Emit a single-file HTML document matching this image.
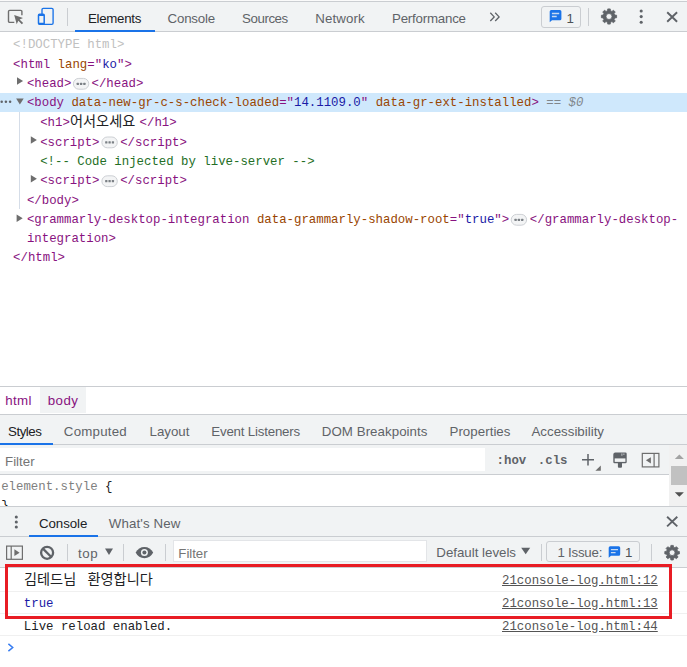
<!DOCTYPE html>
<html lang="en"><head><meta charset="utf-8"><title>DevTools</title><style>
html,body{margin:0;padding:0;}
body{width:687px;height:667px;overflow:hidden;background:#fff;position:relative;}
#r{position:absolute;left:0;top:0;width:687px;height:667px;overflow:hidden;}
#r>div,#r>span,#r>svg{position:absolute;}
#r>svg{overflow:visible;}
.s{font-family:"Liberation Sans",sans-serif;font-size:13.3px;line-height:20px;white-space:pre;}
.m{font-family:"Liberation Mono",monospace;font-size:12.37px;line-height:19px;white-space:pre;}
#clip{position:absolute;left:0;top:475px;width:669.5px;height:30.6px;overflow:hidden;}
</style></head><body><div id="r">
<div style="left:0px;top:0px;width:687px;height:1px;background:#fafafa;"></div>
<div style="left:0px;top:1px;width:687px;height:1px;background:#cacdd1;"></div>
<div style="left:0px;top:2px;width:687px;height:29px;background:#f1f3f4;"></div>
<div style="left:0px;top:31px;width:687px;height:1px;background:#cacdd1;"></div>
<div style="left:75px;top:29.6px;width:79.6px;height:2.1px;background:#1a73e8;"></div>
<div style="left:67px;top:8px;width:1px;height:17.8px;background:#cacdd1;"></div>
<div style="left:588px;top:8px;width:1px;height:17.8px;background:#cacdd1;"></div>
<div style="left:541.2px;top:6.2px;width:39.8px;height:21.5px;background:transparent;border:1px solid #cacdd1;border-radius:3px;box-sizing:border-box;"></div>
<div style="left:0px;top:93px;width:687px;height:19.2px;background:#cfe8fc;"></div>
<div style="left:18.5px;top:112.2px;width:1px;height:96.5px;background:#d5dde8;"></div>
<div style="left:0px;top:386px;width:687px;height:1px;background:#cacdd1;"></div>
<div style="left:40px;top:387px;width:45.8px;height:26px;background:#f1f3f4;"></div>
<div style="left:0px;top:414px;width:687px;height:1px;background:#cacdd1;"></div>
<div style="left:0px;top:415px;width:687px;height:29px;background:#f1f3f4;"></div>
<div style="left:0px;top:444px;width:687px;height:1px;background:#cacdd1;"></div>
<div style="left:0px;top:442.6px;width:52.8px;height:2.3px;background:#1a73e8;"></div>
<div style="left:0px;top:445px;width:687px;height:29px;background:#f1f3f4;"></div>
<div style="left:0px;top:447.5px;width:484.8px;height:23.7px;background:#fff;"></div>
<div style="left:0px;top:474px;width:669px;height:1px;background:#cacdd1;"></div>
<div style="left:669px;top:445px;width:18px;height:60.6px;background:#f1f1f1;"></div>
<div style="left:671px;top:466.3px;width:16px;height:18.4px;background:#c1c1c1;"></div>
<div style="left:0px;top:505.6px;width:687px;height:1.2px;background:#cacdd1;"></div>
<div style="left:0px;top:507px;width:687px;height:29px;background:#f1f3f4;"></div>
<div style="left:0px;top:536px;width:687px;height:1px;background:#cacdd1;"></div>
<div style="left:28.8px;top:534.6px;width:69.2px;height:2.3px;background:#1a73e8;"></div>
<div style="left:0px;top:537px;width:687px;height:30px;background:#f1f3f4;"></div>
<div style="left:0px;top:567px;width:687px;height:1px;background:#cacdd1;"></div>
<div style="left:173.1px;top:540.1px;width:254.1px;height:22.2px;background:#fff;border:1px solid #e3e5e8;box-sizing:border-box;"></div>
<div style="left:67.2px;top:543.5px;width:1px;height:17px;background:#cacdd1;"></div>
<div style="left:123px;top:543.5px;width:1px;height:17px;background:#cacdd1;"></div>
<div style="left:165.3px;top:543.5px;width:1px;height:17px;background:#cacdd1;"></div>
<div style="left:540.8px;top:543.5px;width:1px;height:17px;background:#cacdd1;"></div>
<div style="left:651.3px;top:543.5px;width:1px;height:17px;background:#cacdd1;"></div>
<div style="left:546.2px;top:541.3px;width:93.9px;height:20.9px;background:transparent;border:1px solid #cacdd1;border-radius:3px;box-sizing:border-box;"></div>
<div style="left:0px;top:591px;width:687px;height:1px;background:#f0f0f0;"></div>
<div style="left:0px;top:613.2px;width:687px;height:1px;background:#f0f0f0;"></div>
<div style="left:0px;top:634.8px;width:687px;height:1px;background:#f0f0f0;"></div>
<div style="left:5.1px;top:564.1px;width:666.7px;height:54.5px;background:transparent;border:3px solid #e81c24;box-sizing:border-box;"></div>
<span class="s" style="left:88.00px;top:8.50px;color:#202124;letter-spacing:-0.305px;">Elements</span>
<span class="s" style="left:167.50px;top:8.50px;color:#5f6368;letter-spacing:-0.185px;">Console</span>
<span class="s" style="left:242.00px;top:8.50px;color:#5f6368;letter-spacing:-0.426px;">Sources</span>
<span class="s" style="left:315.20px;top:8.50px;color:#5f6368;letter-spacing:0.117px;">Network</span>
<span class="s" style="left:392.00px;top:8.50px;color:#5f6368;letter-spacing:-0.211px;">Performance</span>
<span class="s" style="left:566.60px;top:8.50px;color:#4d5156;">1</span>
<span class="m" style="left:13.10px;top:35.50px;color:#c0c0c0;">&lt;!DOCTYPE html&gt;</span>
<span class="m" style="left:13.10px;top:55.50px;color:#881280;">&lt;html</span>
<span class="m" style="left:50.20px;top:55.50px;color:#881280;"> </span>
<span class="m" style="left:57.62px;top:55.50px;color:#994500;">lang</span>
<span class="m" style="left:87.30px;top:55.50px;color:#881280;">="</span>
<span class="m" style="left:102.14px;top:55.50px;color:#1a1aa6;">ko</span>
<span class="m" style="left:116.98px;top:55.50px;color:#881280;">"&gt;</span>
<span class="m" style="left:26.90px;top:74.50px;color:#881280;">&lt;head&gt;</span>
<span class="m" style="left:91.52px;top:74.50px;color:#881280;">&lt;/head&gt;</span>
<span class="m" style="left:26.90px;top:93.50px;color:#881280;">&lt;body</span>
<span class="m" style="left:64.00px;top:93.50px;color:#881280;"> </span>
<span class="m" style="left:71.42px;top:93.50px;color:#994500;">data-new-gr-c-s-check-loaded</span>
<span class="m" style="left:279.18px;top:93.50px;color:#881280;">="</span>
<span class="m" style="left:294.02px;top:93.50px;color:#1a1aa6;">14.1109.0</span>
<span class="m" style="left:360.80px;top:93.50px;color:#881280;">"</span>
<span class="m" style="left:368.22px;top:93.50px;color:#881280;"> </span>
<span class="m" style="left:375.64px;top:93.50px;color:#994500;">data-gr-ext-installed</span>
<span class="m" style="left:531.46px;top:93.50px;color:#881280;">&gt;</span>
<span class="m" style="left:538.88px;top:93.50px;color:#881280;"> </span>
<span class="m" style="left:546.30px;top:93.50px;color:#80868b;font-style:italic;">== $0</span>
<span class="m" style="left:40.20px;top:113.50px;color:#881280;">&lt;h1&gt;</span>
<span class="m" style="left:139.60px;top:113.50px;color:#881280;">&lt;/h1&gt;</span>
<span class="m" style="left:40.20px;top:133.50px;color:#881280;">&lt;script&gt;</span>
<span class="m" style="left:120.16px;top:133.50px;color:#881280;">&lt;/script&gt;</span>
<span class="m" style="left:40.20px;top:152.50px;color:#236e25;">&lt;!-- Code injected by live-server --&gt;</span>
<span class="m" style="left:40.20px;top:171.50px;color:#881280;">&lt;script&gt;</span>
<span class="m" style="left:120.16px;top:171.50px;color:#881280;">&lt;/script&gt;</span>
<span class="m" style="left:26.90px;top:191.50px;color:#881280;">&lt;/body&gt;</span>
<span class="m" style="left:26.90px;top:210.50px;color:#881280;">&lt;grammarly-desktop-integration</span>
<span class="m" style="left:249.50px;top:210.50px;color:#881280;"> </span>
<span class="m" style="left:256.92px;top:210.50px;color:#994500;">data-grammarly-shadow-root</span>
<span class="m" style="left:449.84px;top:210.50px;color:#881280;">="</span>
<span class="m" style="left:464.68px;top:210.50px;color:#1a1aa6;">true</span>
<span class="m" style="left:494.36px;top:210.50px;color:#881280;">"&gt;</span>
<span class="m" style="left:529.80px;top:210.50px;color:#881280;">&lt;/grammarly-desktop-</span>
<span class="m" style="left:26.90px;top:229.50px;color:#881280;">integration&gt;</span>
<span class="m" style="left:13.10px;top:248.50px;color:#881280;">&lt;/html&gt;</span>
<span class="s" style="left:5.20px;top:390.50px;color:#881280;letter-spacing:0.369px;">html</span>
<span class="s" style="left:47.80px;top:390.50px;color:#881280;letter-spacing:0.414px;">body</span>
<span class="s" style="left:8.00px;top:421.50px;color:#202124;letter-spacing:-0.453px;">Styles</span>
<span class="s" style="left:63.80px;top:421.50px;color:#5f6368;letter-spacing:0.230px;">Computed</span>
<span class="s" style="left:149.50px;top:421.50px;color:#5f6368;letter-spacing:0.010px;">Layout</span>
<span class="s" style="left:211.30px;top:421.50px;color:#5f6368;letter-spacing:-0.197px;">Event Listeners</span>
<span class="s" style="left:321.80px;top:421.50px;color:#5f6368;letter-spacing:0.051px;">DOM Breakpoints</span>
<span class="s" style="left:449.50px;top:421.50px;color:#5f6368;letter-spacing:0.039px;">Properties</span>
<span class="s" style="left:531.50px;top:421.50px;color:#5f6368;letter-spacing:0.006px;">Accessibility</span>
<span class="s" style="left:5.00px;top:451.50px;color:#757575;letter-spacing:0.006px;">Filter</span>
<span class="m" style="left:496.60px;top:451.50px;color:#5f6368;font-weight:bold;">:hov</span>
<span class="m" style="left:537.80px;top:451.50px;color:#5f6368;font-weight:bold;">.cls</span>
<span class="m" style="left:1.20px;top:477.50px;color:#808080;">element.style</span>
<span class="m" style="left:97.66px;top:477.50px;color:#202124;"> </span>
<span class="m" style="left:105.08px;top:477.50px;color:#202124;">{</span>
<span class="m" style="left:1.20px;top:496.50px;color:#202124;clip-path:inset(0 0 9.6px 0);">}</span>
<span class="s" style="left:39.00px;top:513.50px;color:#202124;letter-spacing:-0.085px;">Console</span>
<span class="s" style="left:108.80px;top:513.50px;color:#5f6368;letter-spacing:0.107px;">What's New</span>
<span class="s" style="left:78.00px;top:543.50px;color:#5f6368;letter-spacing:0.600px;">top</span>
<span class="s" style="left:178.30px;top:543.50px;color:#757575;letter-spacing:-0.044px;">Filter</span>
<span class="s" style="left:436.30px;top:542.50px;color:#5f6368;letter-spacing:-0.009px;">Default levels</span>
<span class="s" style="left:557.40px;top:542.50px;color:#5f6368;letter-spacing:-0.222px;">1 Issue:</span>
<span class="s" style="left:625.10px;top:542.50px;color:#4d5156;">1</span>
<span class="m" style="left:502.00px;top:571.50px;color:#545454;text-decoration:underline;">21console-log.html:12</span>
<span class="m" style="left:23.80px;top:594.50px;color:#1a1aa6;">true</span>
<span class="m" style="left:502.00px;top:594.50px;color:#545454;text-decoration:underline;">21console-log.html:13</span>
<span class="m" style="left:23.80px;top:617.50px;color:#202124;">Live reload enabled.</span>
<span class="m" style="left:502.00px;top:617.50px;color:#545454;text-decoration:underline;">21console-log.html:44</span>
<svg style="left:69.90px;top:114.00px" width="69.90" height="13.90" viewBox="0 0 69.90 13.90"><text x="0" y="12.16" font-size="14.2" fill="#202124" font-family="&quot;Liberation Sans&quot;, &quot;Noto Sans CJK KR&quot;, sans-serif">어서오세요</text></svg>
<svg style="left:23.60px;top:570.90px" width="134.50" height="15.00" viewBox="0 0 134.50 15.00"><text x="0" y="13.18" font-size="14.2" fill="#202124" font-family="&quot;Liberation Sans&quot;, &quot;Noto Sans CJK KR&quot;, sans-serif">김테드님</text><text x="63.5" y="13.18" font-size="14.2" fill="#202124" font-family="&quot;Liberation Sans&quot;, &quot;Noto Sans CJK KR&quot;, sans-serif">환영합니다</text></svg>
<svg style="left:0;top:0" width="687" height="667" viewBox="0 0 687 667">
<path d="M21.9 15.2V11.6a1.2 1.2 0 0 0-1.2-1.2H9.7a1.2 1.2 0 0 0-1.2 1.2v9.6a1.2 1.2 0 0 0 1.2 1.2h4.6" fill="none" stroke="#6e6e6e" stroke-width="1.4"/>
<path d="M14.2 15.1l8.8 2.8-3.4 1.6 3.5 3.5-1.3 1.3-3.5-3.5-1.6 3.4z" fill="#6e6e6e"/>
<rect x="42" y="8.3" width="11.1" height="16" rx="1.3" fill="none" stroke="#1a73e8" stroke-width="1.35"/>
<rect x="38.5" y="14.2" width="5.7" height="10.1" rx="1" fill="#f1f3f4" stroke="#1a73e8" stroke-width="1.5"/>
<path d="M38.5 15.2h5.7M38.5 23.5h5.7" stroke="#1a73e8" stroke-width="1.6"/>
<path d="M490.3 12.8l3.9 4.1-3.9 4.1M495.2 12.8l3.9 4.1-3.9 4.1" fill="none" stroke="#5f6368" stroke-width="1.3"/>
<path d="M551.20 10.10H559.90A1.5 1.5 0 0 1 561.40 11.60V18.70A1.5 1.5 0 0 1 559.90 20.20H552.00L549.70 22.30V11.60A1.5 1.5 0 0 1 551.20 10.10z" fill="#1a73e8"/>
<path d="M551.90 13.50h7.30M551.90 16.50h4.82" stroke="#f1f3f4" stroke-opacity="0.8" stroke-width="1.3"/>
<path d="M610.20 546.30H618.70A1.5 1.5 0 0 1 620.20 547.80V554.30A1.5 1.5 0 0 1 618.70 555.80H611.00L608.70 557.80V547.80A1.5 1.5 0 0 1 610.20 546.30z" fill="#1a73e8"/>
<path d="M610.90 549.70h7.10M610.90 552.70h4.69" stroke="#f1f3f4" stroke-opacity="0.8" stroke-width="1.3"/>
<path d="M607.49 10.80L607.74 8.90L610.26 8.90L610.51 10.80L611.96 11.40L613.48 10.24L615.26 12.02L614.10 13.54L614.70 14.99L616.60 15.24L616.60 17.76L614.70 18.01L614.10 19.46L615.26 20.98L613.48 22.76L611.96 21.60L610.51 22.20L610.26 24.10L607.74 24.10L607.49 22.20L606.04 21.60L604.52 22.76L602.74 20.98L603.90 19.46L603.30 18.01L601.40 17.76L601.40 15.24L603.30 14.99L603.90 13.54L602.74 12.02L604.52 10.24L606.04 11.40zM606.00 16.50a3.0 3.0 0 1 0 6.00 0a3.0 3.0 0 1 0 -6.00 0z" fill="#5f6368" fill-rule="evenodd" stroke="#5f6368" stroke-width="0.8" stroke-linejoin="round"/>
<path d="M670.64 547.19L670.89 545.40L673.31 545.40L673.56 547.19L674.96 547.77L676.40 546.68L678.12 548.40L677.03 549.84L677.61 551.24L679.40 551.49L679.40 553.91L677.61 554.16L677.03 555.56L678.12 557.00L676.40 558.72L674.96 557.63L673.56 558.21L673.31 560.00L670.89 560.00L670.64 558.21L669.24 557.63L667.80 558.72L666.08 557.00L667.17 555.56L666.59 554.16L664.80 553.91L664.80 551.49L666.59 551.24L667.17 549.84L666.08 548.40L667.80 546.68L669.24 547.77zM669.20 552.70a2.9 2.9 0 1 0 5.80 0a2.9 2.9 0 1 0 -5.80 0z" fill="#5f6368" fill-rule="evenodd" stroke="#5f6368" stroke-width="0.8" stroke-linejoin="round"/>
<circle cx="641.2" cy="11" r="1.55" fill="#5f6368"/>
<circle cx="641.2" cy="16.6" r="1.55" fill="#5f6368"/>
<circle cx="641.2" cy="22.2" r="1.55" fill="#5f6368"/>
<circle cx="16.3" cy="517" r="1.55" fill="#5f6368"/>
<circle cx="16.3" cy="522" r="1.55" fill="#5f6368"/>
<circle cx="16.3" cy="527" r="1.55" fill="#5f6368"/>
<path d="M667.2 12.2l9.9 9.6M677.1 12.2l-9.9 9.6" stroke="#5f6368" stroke-width="1.9"/>
<path d="M667.1 516.8l10.2 9.6M677.3 516.8l-10.2 9.6" stroke="#5f6368" stroke-width="1.9"/>
<path d="M17 77.2L23.1 81.0L17 84.8z" fill="#6e6e6e"/>
<path d="M16.1 98.4L23.7 98.4L19.9 104.60000000000001z" fill="#6e6e6e"/>
<path d="M30.8 136.2L36.9 140.0L30.8 143.8z" fill="#6e6e6e"/>
<path d="M30.8 175.0L36.9 178.8L30.8 182.6z" fill="#6e6e6e"/>
<path d="M16.6 214.4L22.700000000000003 218.2L16.6 222.0z" fill="#6e6e6e"/>
<circle cx="1.7" cy="101.7" r="1.25" fill="#5f6368"/>
<circle cx="5.9" cy="101.7" r="1.25" fill="#5f6368"/>
<circle cx="10.1" cy="101.7" r="1.25" fill="#5f6368"/>
<rect x="73.4" y="78.4" width="15.4" height="10.8" rx="5.4" fill="#f3f4f5" stroke="#cdd0d4" stroke-width="1"/>
<rect x="76.65" y="82.70" width="2.3" height="2.2" rx="0.5" fill="#7b8085"/>
<rect x="79.95" y="82.70" width="2.3" height="2.2" rx="0.5" fill="#7b8085"/>
<rect x="83.25" y="82.70" width="2.3" height="2.2" rx="0.5" fill="#7b8085"/>
<rect x="101.9" y="137.0" width="15.4" height="10.8" rx="5.4" fill="#f3f4f5" stroke="#cdd0d4" stroke-width="1"/>
<rect x="105.15" y="141.30" width="2.3" height="2.2" rx="0.5" fill="#7b8085"/>
<rect x="108.45" y="141.30" width="2.3" height="2.2" rx="0.5" fill="#7b8085"/>
<rect x="111.75" y="141.30" width="2.3" height="2.2" rx="0.5" fill="#7b8085"/>
<rect x="101.9" y="175.8" width="15.4" height="10.8" rx="5.4" fill="#f3f4f5" stroke="#cdd0d4" stroke-width="1"/>
<rect x="105.15" y="180.10" width="2.3" height="2.2" rx="0.5" fill="#7b8085"/>
<rect x="108.45" y="180.10" width="2.3" height="2.2" rx="0.5" fill="#7b8085"/>
<rect x="111.75" y="180.10" width="2.3" height="2.2" rx="0.5" fill="#7b8085"/>
<rect x="511.2" y="214.4" width="15.4" height="10.8" rx="5.4" fill="#f3f4f5" stroke="#cdd0d4" stroke-width="1"/>
<rect x="514.45" y="218.70" width="2.3" height="2.2" rx="0.5" fill="#7b8085"/>
<rect x="517.75" y="218.70" width="2.3" height="2.2" rx="0.5" fill="#7b8085"/>
<rect x="521.05" y="218.70" width="2.3" height="2.2" rx="0.5" fill="#7b8085"/>
<path d="M582 459.7h12M588 453.9v11.6" stroke="#5f6368" stroke-width="1.5"/>
<path d="M600.8 465.4v5.4h-5.4z" fill="#6e6e6e"/>
<path d="M615.3 452.4h10.1a1.3 1.3 0 0 1 1.3 1.3v8.2a1.3 1.3 0 0 1-1.3 1.3h-3.4v3.6a1 1 0 0 1-1 1h-2.1a1 1 0 0 1-1-1v-3.6h-3.3a1.3 1.3 0 0 1-1.3-1.3v-7.5a2 2 0 0 1 2-2z" fill="#5f6368"/>
<path d="M614.7 458.4h10.7v3.5h-10.7z" fill="#f1f3f4"/>
<path d="M621.9 453.4v2.4M623.9 453.4v1.6" stroke="#d8dadd" stroke-width="0.8"/>
<rect x="642.3" y="453.4" width="16.6" height="13.5" fill="none" stroke="#6e6e6e" stroke-width="1.2"/>
<path d="M654.1 453.4v13.5" stroke="#6e6e6e" stroke-width="1.2"/><path d="M650.9 457.2v6.2l-5-3.1z" fill="#6e6e6e"/>
<path d="M674.8 458.9h9.1l-4.55-4.5z" fill="#a3a3a3"/>
<path d="M674.8 492.3h9.1l-4.55 4.5z" fill="#505050"/>
<rect x="6.6" y="546.1" width="15.8" height="13.2" fill="none" stroke="#6e6e6e" stroke-width="1.2"/>
<path d="M11.2 546.1v13.2" stroke="#6e6e6e" stroke-width="1.2"/><path d="M14.4 549.3v6.8l5.2-3.4z" fill="#6e6e6e"/>
<circle cx="47.1" cy="552.8" r="6.0" fill="none" stroke="#5f6368" stroke-width="2.3"/><path d="M42.9 548.6l8.4 8.4" stroke="#5f6368" stroke-width="2.3"/>
<path d="M105 548.4L113 548.4L109.0 555.0z" fill="#5f6368"/>
<path d="M521.2 547.7L530.2 547.7L525.7 554.3000000000001z" fill="#5f6368"/>
<path d="M135.6 552.6c2-3.6 5-5.6 8.8-5.6s6.8 2 8.8 5.6c-2 3.6-5 5.6-8.8 5.6s-6.8-2-8.8-5.6z" fill="#5f6368"/>
<circle cx="144.4" cy="552.6" r="3.5" fill="#f1f3f4"/><circle cx="144.4" cy="552.6" r="2" fill="#5f6368"/>
<path d="M8.4 643.9l4.3 3.6-4.3 3.6" fill="none" stroke="#367cf1" stroke-width="1.5"/>
</svg>
</div></body></html>
